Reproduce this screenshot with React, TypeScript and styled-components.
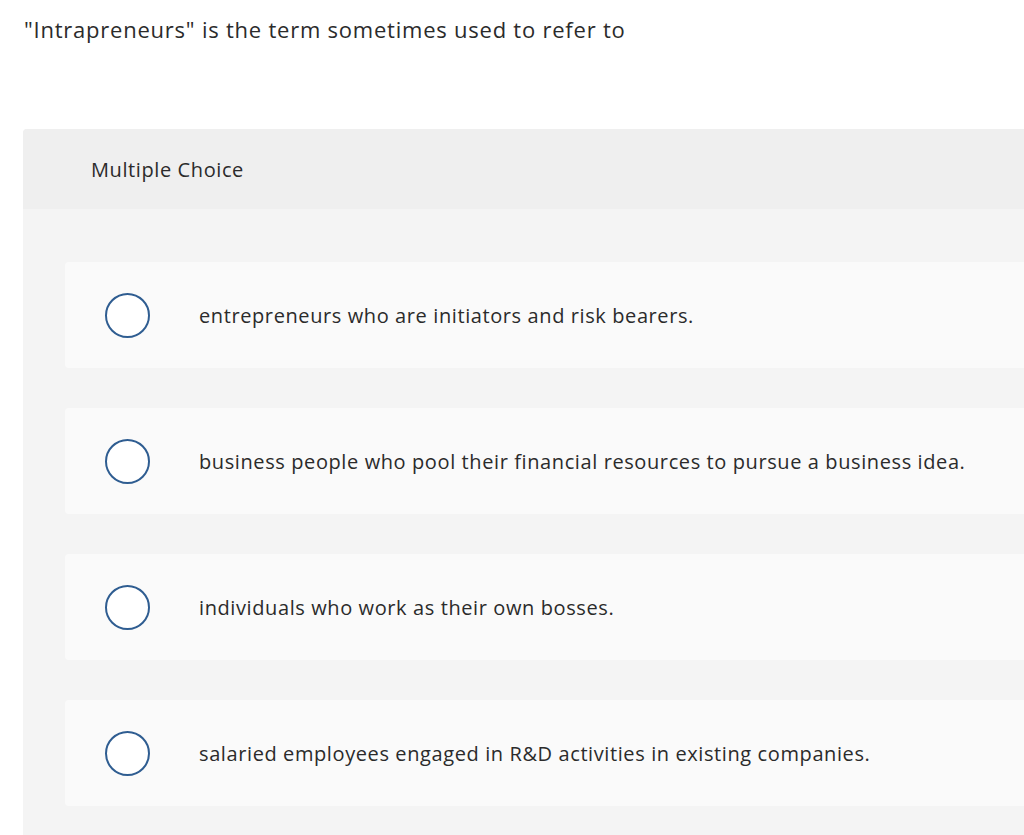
import styled, { createGlobalStyle } from 'styled-components'

const GlobalStyle = createGlobalStyle`
  html, body {
    margin: 0;
    padding: 0;
    background: #ffffff;
    overflow: hidden;
  }
  body {
    font-family: "Open Sans", Lato, sans-serif;
    font-variant-ligatures: none;
    color: #2b2b2b;
  }
`

const Page = styled.main`
  width: 1024px;
  height: 835px;
  overflow: hidden;
  padding: 14px 0 0 23px;
  box-sizing: border-box;
`

const Prompt = styled.p`
  margin: 0 0 85px 1px;
  font-size: 22px;
  line-height: 30px;
  letter-spacing: 0.77px;
  color: #2b2b2b;
`

const Panel = styled.section`
  width: 1060px;
  border-radius: 4px 0 0 0;
  background: #f4f4f4;
`

const PanelHeader = styled.header`
  height: 80px;
  display: flex;
  align-items: center;
  padding-left: 68px;
  background: #efefef;
  border-radius: 4px 0 0 0;
  font-size: 20px;
  letter-spacing: 0.6px;
  color: #2b2b2b;
`

const Choices = styled.div`
  display: flex;
  flex-direction: column;
  gap: 40px;
  padding: 53px 0 40px 42px;
`

const Choice = styled.label`
  height: 106px;
  display: flex;
  align-items: center;
  background: #fafafa;
  border-radius: 4px 0 0 4px;
  cursor: pointer;
`

const Radio = styled.span`
  width: 41px;
  height: 41px;
  margin-left: 40px;
  border: 2px solid #2f5d91;
  border-radius: 50%;
  background: #ffffff;
  flex-shrink: 0;
`

const ChoiceText = styled.span`
  margin-left: 49px;
  font-size: 20px;
  letter-spacing: 0.6px;
  color: #2b2b2b;
`

const options = [
  'entrepreneurs who are initiators and risk bearers.',
  'business people who pool their financial resources to pursue a business idea.',
  'individuals who work as their own bosses.',
  'salaried employees engaged in R&D activities in existing companies.',
]

export default function App() {
  return (
    <>
      <GlobalStyle />
      <Page>
        <Prompt>"Intrapreneurs" is the term sometimes used to refer to</Prompt>
        <Panel>
          <PanelHeader>Multiple Choice</PanelHeader>
          <Choices>
            {options.map((text) => (
              <Choice key={text}>
                <Radio />
                <ChoiceText>{text}</ChoiceText>
              </Choice>
            ))}
          </Choices>
        </Panel>
      </Page>
    </>
  )
}
